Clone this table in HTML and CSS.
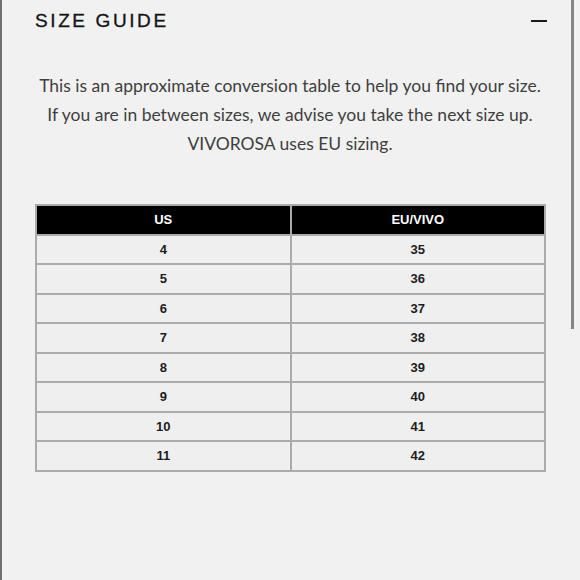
FILE: index.html
```html
<!DOCTYPE html>
<html>
<head>
<meta charset="utf-8">
<link rel="stylesheet" href="styles.css">
</head>
<body>
<div class="page">
  <div class="header">
    <h1 class="title">SIZE GUIDE</h1>
    <span class="minus"></span>
  </div>
  <p class="intro">This is an approximate conversion table to help you find your size.<br>If you are in between sizes, we advise you take the next size up.<br>VIVOROSA uses EU sizing.</p>
  <table class="sizes">
    <thead>
      <tr><th>US</th><th>EU/VIVO</th></tr>
    </thead>
    <tbody>
      <tr><td>4</td><td>35</td></tr>
      <tr><td>5</td><td>36</td></tr>
      <tr><td>6</td><td>37</td></tr>
      <tr><td>7</td><td>38</td></tr>
      <tr><td>8</td><td>39</td></tr>
      <tr><td>9</td><td>40</td></tr>
      <tr><td>10</td><td>41</td></tr>
      <tr><td>11</td><td>42</td></tr>
    </tbody>
  </table>
</div>
<div class="scrollbar"></div>
</body>
</html>
```
FILE: styles.css
```css
html, body {
  margin: 0;
  padding: 0;
  background: #f1f1f1;
}
body {
  width: 580px;
  height: 580px;
  overflow: hidden;
  position: relative;
}
.page {
  box-sizing: border-box;
  height: 580px;
  border-left: 2px solid #707070;
  padding: 0 35px 0 33px;
}
.header {
  display: flex;
  justify-content: space-between;
  align-items: center;
  height: 41px;
}
.title {
  margin: 0;
  font-family: "Liberation Sans", Arial, sans-serif;
  font-weight: normal;
  font-size: 19px;
  letter-spacing: 2.6px;
  color: #151515;
  line-height: 1;
  -webkit-text-stroke: 0.35px #151515;
}
.minus {
  display: block;
  width: 16px;
  height: 2px;
  background: #1a1a1a;
  margin-right: -2px;
}
.intro {
  margin: 30px 0 0;
  text-align: center;
  white-space: nowrap;
  font-family: Lato, "Open Sans", sans-serif;
  font-size: 17.5px;
  line-height: 29px;
  color: #3f3f3f;
}
.sizes {
  margin-top: 46px;
  width: 511px;
  border-collapse: collapse;
  border: 2px solid #ababab;
  font-family: "Liberation Sans", Arial, sans-serif;
  font-weight: bold;
  font-size: 13px;
  table-layout: fixed;
}
.sizes th, .sizes td {
  border: 2px solid #ababab;
  text-align: center;
  height: 27.5px;
  padding: 0;
}
.sizes th {
  background: #000;
  color: #fff;
}
.sizes td {
  background: #efefef;
  color: #1d1d1d;
}
.scrollbar {
  position: absolute;
  top: 0;
  right: 6px;
  width: 3px;
  height: 329px;
  background: #858585;
}
```
